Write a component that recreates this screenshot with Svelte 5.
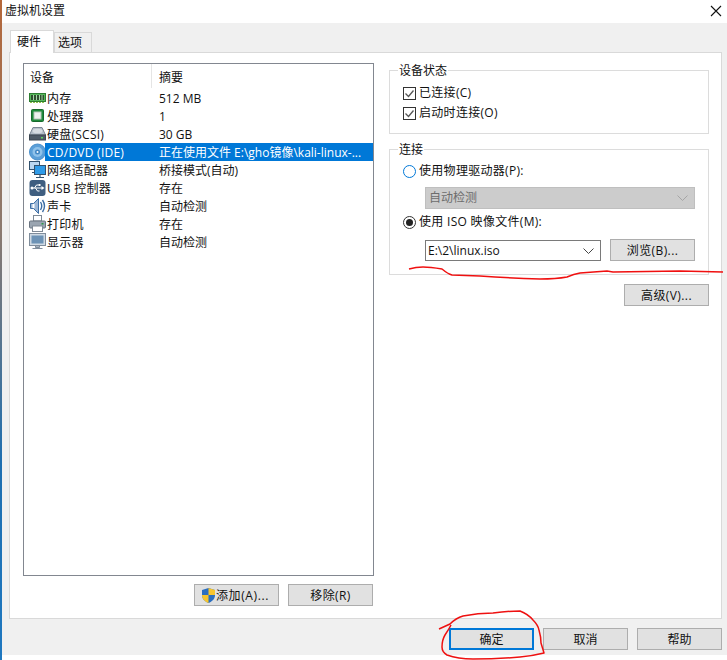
<script>
  const devices = [
    { id: 'mem', name: '内存', info: '512 MB' },
    { id: 'cpu', name: '处理器', info: '1' },
    { id: 'hdd', name: '硬盘(SCSI)', info: '30 GB' },
    { id: 'cd', name: 'CD/DVD (IDE)', info: '正在使用文件 E:\\gho镜像\\kali-linux-...', selected: true },
    { id: 'net', name: '网络适配器', info: '桥接模式(自动)' },
    { id: 'usb', name: 'USB 控制器', info: '存在' },
    { id: 'snd', name: '声卡', info: '自动检测' },
    { id: 'prn', name: '打印机', info: '存在' },
    { id: 'dsp', name: '显示器', info: '自动检测' }
  ];
</script>

<div class="window">
  <div class="edge"></div>
  <div class="main">
    <header class="titlebar">
      <span>虚拟机设置</span>
      <svg class="close" width="12" height="12" viewBox="0 0 12 12"><path d="M1 1l10 10M11 1L1 11" stroke="#111" stroke-width="1.1" fill="none"/></svg>
    </header>

    <div class="body">
      <div class="tabs">
        <div class="tab active">硬件</div>
        <div class="tab">选项</div>
      </div>

      <div class="panel">
        <div class="left">
          <div class="list">
            <div class="list-head">
              <div class="col1 hcell">设备</div>
              <div class="hcell col2">摘要</div>
            </div>
            {#each devices as d}
              <div class="row">
                <div class="col1 name-cell">
                  <svg class="dev-icon" width="18" height="18" viewBox="0 0 18 18">
                    {#if d.id === 'mem'}
                      <rect x="0.500" y="4.500" width="16" height="8" fill="#56b85a" stroke="#2e7d32"/>
                      <rect x="2" y="6" width="13" height="5" fill="#2f4f2f"/>
                      <path d="M4.500 6v5M7.500 6v5M10.500 6v5M13 6v5" stroke="#a5d6a7"/>
                      <path d="M1 13.500h15" stroke="#8bc34a" stroke-dasharray="2 1"/>
                    {:else if d.id === 'cpu'}
                      <rect x="2.500" y="2.500" width="12" height="12" rx="1" fill="#1f8a3b" stroke="#17692c"/>
                      <rect x="5" y="5" width="7" height="7" fill="#eef2ee" stroke="#b9c6b9"/>
                    {:else if d.id === 'hdd'}
                      <path d="M4 2.500h9l3.500 7.500H.5z" fill="#b4bec9" stroke="#7b8794"/>
                      <ellipse cx="8.500" cy="6" rx="5" ry="2.300" fill="#d6dce2"/>
                      <rect x="0.500" y="10" width="16" height="5" fill="#4f5b68" stroke="#3d4752"/>
                      <rect x="12" y="12" width="2" height="1.500" fill="#5fd35f"/>
                    {:else if d.id === 'cd'}
                      <circle cx="8.500" cy="9" r="8" fill="#5b9fd8" stroke="#4a90cc"/>
                      <circle cx="8.500" cy="9" r="5" fill="#8fc2ea"/>
                      <circle cx="8.500" cy="9" r="2.500" fill="#3f86c4"/>
                      <circle cx="8.500" cy="9" r="1" fill="#fff"/>
                    {:else if d.id === 'net'}
                      <rect x="0.500" y="0.500" width="10" height="8" fill="#bcd7ef" stroke="#33526e"/>
                      <path d="M3 11.500h5M5.500 9v2.500" stroke="#33526e"/>
                      <rect x="5.500" y="4.500" width="11" height="9" fill="#2f9be8" stroke="#33526e"/>
                      <path d="M7 16.500h8M11 14v2.500" stroke="#33526e" stroke-width="1.200"/>
                    {:else if d.id === 'usb'}
                      <rect x="0.500" y="1" width="16" height="16" rx="3" fill="#3f5e80"/>
                      <path d="M3 9h10M5.500 9l2-3h2M6.500 9l2 3h2" stroke="#fff" fill="none"/>
                      <path d="M12.500 7l3 2-3 2z" fill="#fff"/>
                      <rect x="9.500" y="5" width="2" height="2" fill="#fff"/>
                      <circle cx="3" cy="9" r="1.500" fill="#fff"/>
                    {:else if d.id === 'snd'}
                      <path d="M1.500 6.500h3L9.500 1.500v15l-5-5h-3z" fill="#9db7d6" stroke="#3d6ea5"/>
                      <path d="M4.500 7v4" stroke="#fff" stroke-width="2"/>
                      <path d="M11.500 5q2.500 4 0 8M13.500 3q4 6 0 12" stroke="#3d6ea5" stroke-width="1.400" fill="none"/>
                    {:else if d.id === 'prn'}
                      <rect x="4.500" y="0.500" width="8" height="5.500" fill="#fff" stroke="#7f8a96"/>
                      <rect x="0.500" y="6" width="16" height="7" rx="1" fill="#9aa5b1" stroke="#6a7480"/>
                      <rect x="3.500" y="11" width="10" height="5.500" fill="#fff" stroke="#7f8a96"/>
                      <rect x="12.500" y="8" width="2" height="1.500" fill="#2e9a4a"/>
                    {:else}
                      <rect x="0.500" y="0.500" width="16" height="12" fill="#d0dae4" stroke="#7f8d9c"/>
                      <rect x="2.500" y="2.500" width="12" height="8" fill="#6d93b6"/>
                      <path d="M6.500 12.500h4v2h-4zM3.500 15.500h10" fill="#a8b4c0" stroke="#7f8d9c"/>
                    {/if}
                  </svg>
                  <span class="name" class:selected={d.selected}>{d.name}</span>
                </div>
                <div class="col2 info" class:selected={d.selected}>{d.info}</div>
              </div>
            {/each}
          </div>

          <div class="list-actions">
            <button class="btn shield-btn">
              <svg width="15" height="17" viewBox="0 0 15 17">
                <path d="M7.500 1l6.500 2v5c0 4-3 6.500-6.500 8C4 14.500 1 12 1 8V3z" fill="#2b6fc0"/>
                <path d="M7.500 1l6.500 2v5H7.500zM7.500 8v8C4 14.500 1 12 1 8z" fill="#f7c52e"/>
              </svg>
              添加(A)...
            </button>
            <button class="btn wide">移除(R)</button>
          </div>
        </div>

        <div class="right">
          <fieldset class="group status">
            <legend>设备状态</legend>
            <label class="opt">
              <svg width="13" height="13" viewBox="0 0 13 13"><rect x=".5" y=".5" width="12" height="12" fill="#fff" stroke="#333"/><path d="M2.500 6.500l3 3 5-6" stroke="#555" stroke-width="1.300" fill="none"/></svg>
              已连接(C)
            </label>
            <label class="opt">
              <svg width="13" height="13" viewBox="0 0 13 13"><rect x=".5" y=".5" width="12" height="12" fill="#fff" stroke="#333"/><path d="M2.500 6.500l3 3 5-6" stroke="#555" stroke-width="1.300" fill="none"/></svg>
              启动时连接(O)
            </label>
          </fieldset>

          <fieldset class="group conn">
            <legend>连接</legend>
            <label class="opt">
              <svg width="13" height="13" viewBox="0 0 13 13"><circle cx="6.500" cy="6.500" r="6" fill="#fff" stroke="#0078d7"/></svg>
              使用物理驱动器(P):
            </label>
            <div class="select disabled">
              <span>自动检测</span>
              <svg width="11" height="6" viewBox="0 0 11 6"><path d="M.5.500l5 5 5-5" stroke="#a5a5a5" fill="none"/></svg>
            </div>
            <label class="opt iso">
              <svg width="13" height="13" viewBox="0 0 13 13"><circle cx="6.500" cy="6.500" r="6" fill="#fff" stroke="#333"/><circle cx="6.500" cy="6.500" r="3.500" fill="#222"/></svg>
              使用 ISO 映像文件(M):
            </label>
            <div class="file-row">
              <div class="select combo">
                <span>E:\2\linux.iso</span>
                <svg width="11" height="6" viewBox="0 0 11 6"><path d="M.5.500l5 5 5-5" stroke="#444" fill="none"/></svg>
              </div>
              <button class="btn wide">浏览(B)...</button>
            </div>
          </fieldset>

          <div class="adv"><button class="btn wide">高级(V)...</button></div>
        </div>
      </div>

      <footer class="footer">
        <button class="btn primary">确定</button>
        <button class="btn">取消</button>
        <button class="btn">帮助</button>
      </footer>
    </div>
    <div class="bottom"></div>
  </div>

  <svg class="ink" width="727" height="660" viewBox="0 0 727 660">
    <path d="M409 269Q416 267 423 267T442 269Q448 274 452 275L480 276Q510 278 540 279Q556 279 567 277Q574 274 580 273L607 271L613 272L680 271L723 272" fill="none" stroke="#f01010" stroke-width="1.500" stroke-linejoin="round"/>
    <path d="M439 629L450 624Q456 618 463 616Q478 613 493 613Q508 611 520 611Q528 614 533 620Q538 625 539 630Q541 637 541 643L544 653Q532 656 520 657Q496 659 473 659Q458 659 447 655Q442 652 442 647Q442 640 445 635Q449 629 451 625" fill="none" stroke="#ee1111" stroke-width="1.500" stroke-linejoin="round"/>
  </svg>
</div>

<style>
  :global(body) { margin: 0; background: #fff; }
  * { box-sizing: border-box; }
  .window {
    position: relative;
    width: 727px;
    height: 660px;
    display: flex;
    font: 12px/16px "Open Sans", "Noto Sans CJK SC", sans-serif;
    color: #111;
    overflow: hidden;
  }
  .edge { width: 2px; background: linear-gradient(#b5683a, #8b7a70 35%, #1f6fb0 70%, #1f78c0); }
  .main { flex: 1; display: flex; flex-direction: column; min-width: 0; }
  .titlebar {
    height: 23px;
    background: #fff;
    display: flex;
    align-items: center;
    justify-content: space-between;
    padding: 0 5px 2px 3px;
  }
  .body { height: 632px; background: #f0f0f0; padding: 7px 5px 0 7px; display: flex; flex-direction: column; }
  .bottom { flex: 1; background: #fff; }
  .tabs { display: flex; height: 22px; align-items: flex-end; padding-left: 1px; position: relative; z-index: 1; }
  .tab {
    height: 20px;
    width: 38px;
    border: 1px solid #d9d9d9;
    border-bottom: 0;
    padding-right: 6px;
    text-align: center;
    line-height: 20px;
    background: #f0f0f0;
  }
  .tab.active { height: 23px; width: 44px; margin-bottom: -1px; background: #fff; line-height: 22px; border-right: 1px solid #d9d9d9; }
  .panel {
    height: 567px;
    background: #fff;
    border: 1px solid #d9d9d9;
    padding: 10px 12px 0 13px;
    display: flex;
    gap: 15px;
  }
  .left { width: 351px; display: flex; flex-direction: column; }
  .list { height: 513px; border: 1px solid #828790; background: #fff; flex: none; }
  .list-head { display: flex; height: 25px; }
  .hcell { padding-top: 6px; }
  .col1 { width: 128px; flex: none; padding-left: 6px; }
  .col2 { flex: 1; padding-left: 7px; min-width: 0; }
  .list-head .col1 { border-right: 1px solid #e5e5e5; height: 24px; }
  .list-head .col2 { margin-right: 1px; }
  .row { display: flex; height: 18px; align-items: center; }
  .name-cell { display: flex; align-items: center; padding-left: 5px; height: 18px; }
  .dev-icon { flex: none; margin-right: -2px; }
  .name { padding: 1px 1px 0 2px; height: 18px; line-height: 17px; flex: 1; white-space: nowrap; letter-spacing: .25px; }
  .info { height: 18px; line-height: 17px; padding-top: 1px; white-space: nowrap; overflow: hidden; }
  .selected { background: #0078d7; color: #fff; }
  .list-actions { display: flex; justify-content: flex-end; gap: 9px; margin-top: 8px; padding-right: 1px; }
  .btn {
    width: 85px;
    height: 22px;
    padding: 1px 0 0;
    border: 1px solid #adadad;
    background: #e1e1e1;
    font: inherit;
    color: #111;
    display: inline-flex;
    align-items: center;
    justify-content: center;
    flex: none;
  }
  .wide { letter-spacing: .4px; }
  .shield-btn { justify-content: flex-start; padding-left: 6px; letter-spacing: .6px; }
  .right { flex: 1; min-width: 0; display: flex; flex-direction: column; }
  .group { border: 1px solid #dcdcdc; margin: 0; padding: 0 13px 0 13px; min-width: 0; }
  .group legend { padding: 0 1px; margin-left: -5px; line-height: 14px; transform: translateY(1px); }
  .status { height: 71px; padding-top: 6px; }
  .conn { height: 133px; margin-top: 8px; padding-top: 5px; }
  .opt { display: flex; align-items: center; gap: 3px; height: 20px; letter-spacing: .3px; }
  .select {
    height: 22px;
    display: flex;
    align-items: center;
    justify-content: space-between;
    padding: 0 6px 0 2px;
  }
  .disabled { background: #cccccc; border: 1px solid #bfbfbf; color: #6d6d6d; margin: 6px 0 0 22px; padding-left: 3px; }
  .iso { margin-top: 3px; }
  .file-row { display: flex; gap: 9px; margin: 7px 0 0 22px; align-items: center; }
  .combo { width: 176px; height: 21px; border: 1px solid #7a7a7a; background: #fff; margin-top: 1px; }
  .adv { display: flex; justify-content: flex-end; margin-top: 9px; }
  .footer { flex: 1; display: flex; justify-content: flex-end; gap: 9px; padding: 9px 0 0; }
  .primary { border: 2px solid #0078d7; }
  .ink { position: absolute; inset: 0; pointer-events: none; }
</style>
